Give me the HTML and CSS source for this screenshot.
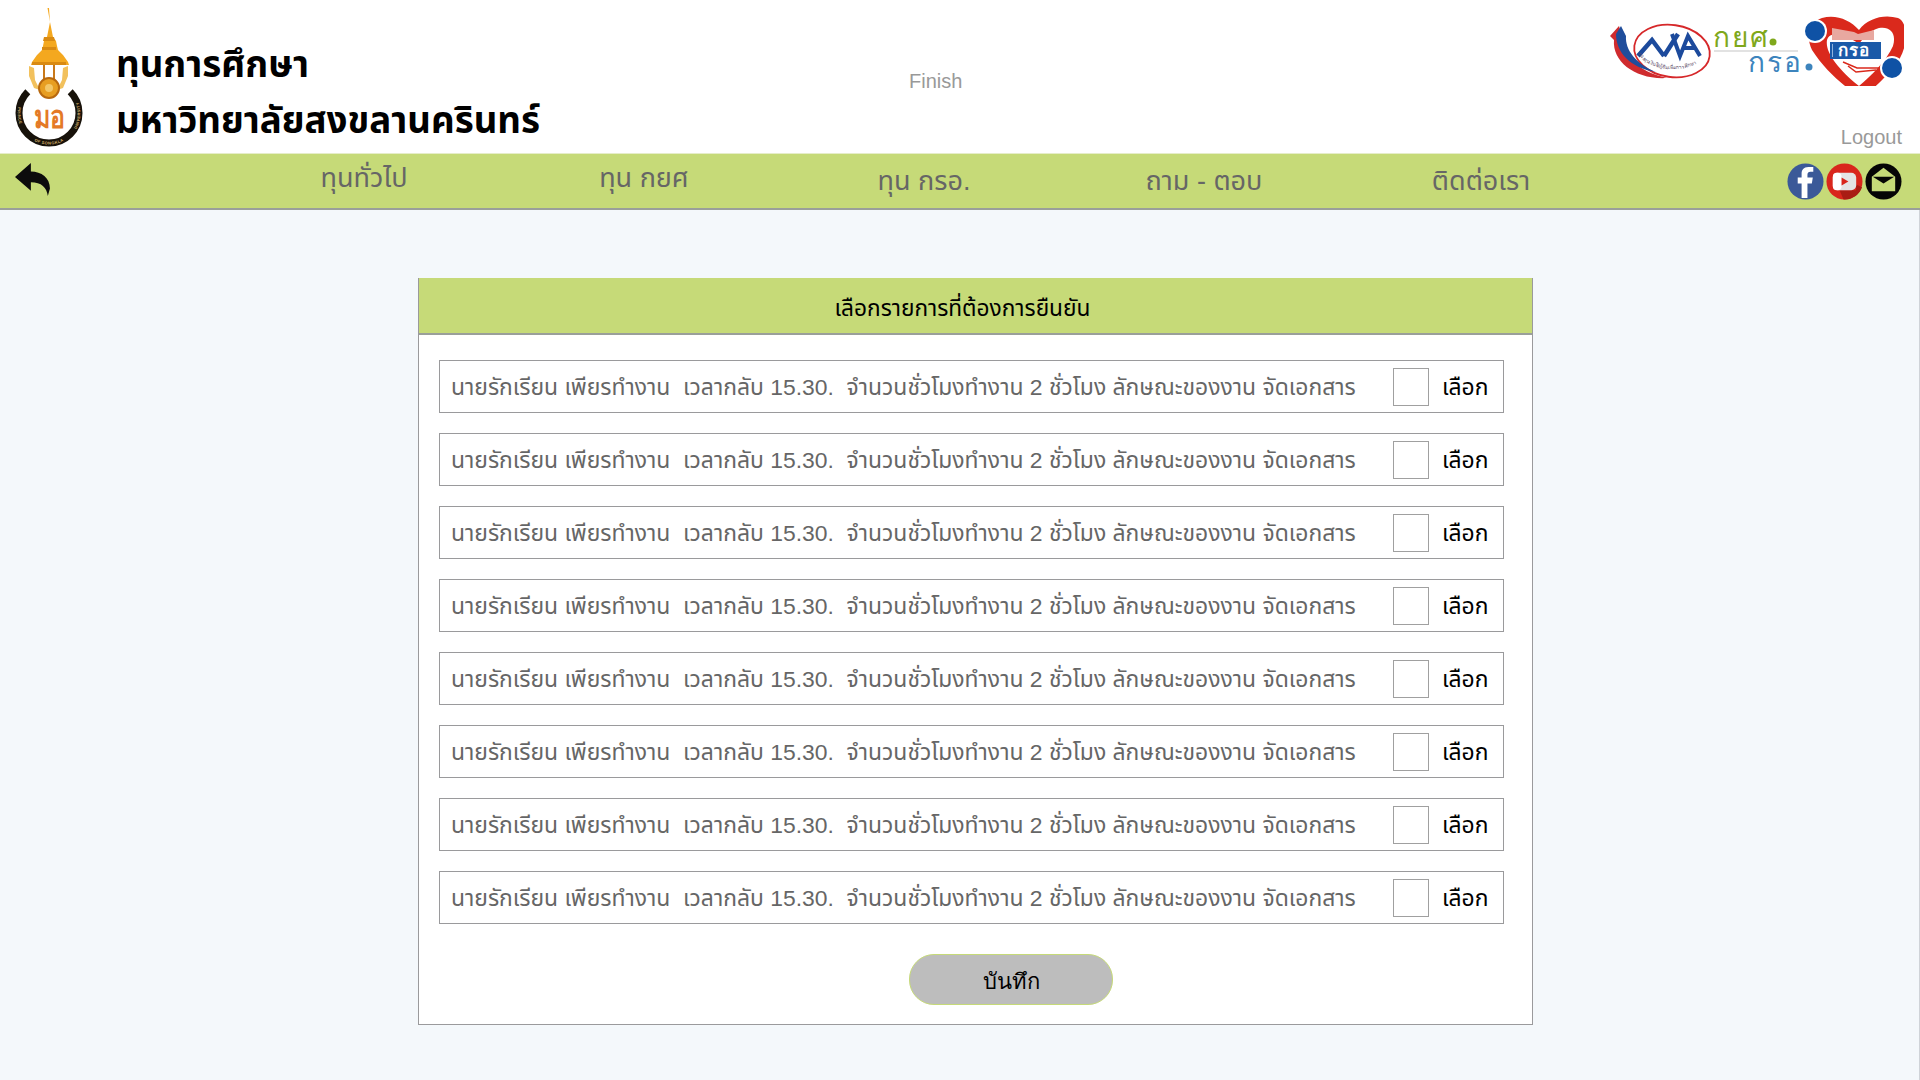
FILE: index.html
```html
<!DOCTYPE html>
<html lang="th">
<head>
<meta charset="utf-8">
<title>ทุนการศึกษา</title>
<link rel="stylesheet" href="styles.css">
</head>
<body>
<header class="top">
  <svg class="psu" viewBox="0 0 100 153" aria-hidden="true">
    <defs>
      <path id="ring-left" d="M20.700 100A31.500 31.500 0 0 0 23 131"/>
      <path id="ring-bottom" d="M26.700 135.300A31.500 31.500 0 0 0 71.300 135.300"/>
      <path id="ring-right" d="M75 131A31.500 31.500 0 0 0 77.300 100"/>
    </defs>
    <path d="M47.500 8h1.500l1 14 2 10 1 5 3 4 1 5 1 4 5 5 5 7 1 3H31l1-3 5-7 5-5 1-4 1-5 3-4 1-5 2-10z" fill="#f4a81f"/>
    <path d="M44 37h10l1 4H43zM42 47h14v3H42zM32 62h34v3H32z" fill="#d98a12"/>
    <path d="M43 65h2v16h-2zM53 65h2v16h-2z" fill="#c9791a"/>
    <path d="M29 66l5 2 1 12 5 10-6-2-5-12zM68 66l-5 2-1 12-5 10 6-2 5-12z" fill="#f2c15d"/>
    <circle cx="49" cy="88" r="10" fill="#e79e22" stroke="#b8690f" stroke-width="2"/>
    <circle cx="49" cy="88" r="4" fill="#f3c768"/>
    <path d="M27.800 91.800A30 30 0 1 0 70.200 91.800" fill="none" stroke="#17120a" stroke-width="7"/>
    <text class="psu-ring"><textPath href="#ring-left" startOffset="50%">PRINCE</textPath></text>
    <text class="psu-ring"><textPath href="#ring-bottom" startOffset="50%">OF SONGKLA</textPath></text>
    <text class="psu-ring"><textPath href="#ring-right" startOffset="50%">UNIVERSITY</textPath></text>
    <text x="34" y="128" class="psu-mark" textLength="31" lengthAdjust="spacingAndGlyphs">มอ</text>
  </svg>
  <div class="brand">
    <div class="brand-line">ทุนการศึกษา</div>
    <div class="brand-line">มหาวิทยาลัยสงขลานครินทร์</div>
  </div>
  <div class="finish">Finish</div>
  <div class="top-right">
    <svg class="partners" viewBox="0 0 304 76" aria-hidden="true">
      <defs><path id="sfund" d="M38 44C48 60 80 66 104 50"/></defs>
      <ellipse cx="72" cy="41" rx="38" ry="26" fill="none" stroke="#d6282a" stroke-width="1.800" transform="rotate(8 72 41)"/>
      <path d="M10 26l9-10 4 13c-1 16 14 32 44 39C36 70 12 52 14 30z" fill="#cf2b2e"/>
      <path d="M16 24l5-8 5 10c-1 14 10 28 30 36C30 58 16 42 16 24z" fill="#1f4d9b"/>
      <path d="M38 46l14-16 12 16M64 46l14-22" fill="none" stroke="#1c4a9c" stroke-width="4.500"/>
      <path d="M72 24l8 22 8-20 12 20M82 38h14" fill="none" stroke="#1c4a9c" stroke-width="4"/>
      <text class="t-fund"><textPath href="#sfund">กองทุนเงินให้กู้ยืมเพื่อการศึกษา</textPath></text>
      <text x="113" y="37" class="t-green">กยศ</text>
      <circle cx="173" cy="32" r="3.500" fill="#7fa81c"/>
      <rect x="114" y="40" width="84" height="2" fill="#e2e2e2"/>
      <text x="148" y="62" class="t-blue">กรอ</text>
      <circle cx="209" cy="57" r="3.500" fill="#3d84bd"/>
      <path fill-rule="evenodd" d="M259 20C268 8 284 4 298 8c10 4 10 26 2 40-10 16-26 30-38 40-16-10-36-26-50-48-6-12-4-28 10-32 14-4 28 2 37 12zM259 34c-8-6-28-16-32-4-2 12 10 28 32 46 12-10 28-26 34-40 4-14-4-20-14-18-8 2-14 8-20 16z" fill="#da291c"/>
      <circle cx="215" cy="21" r="12" fill="#fff"/>
      <circle cx="215" cy="21" r="10" fill="#0f52a5"/>
      <circle cx="292" cy="58" r="12" fill="#fff"/>
      <circle cx="292" cy="58" r="10" fill="#0f52a5"/>
      <path d="M232 18l22 4 4 2 16-4v10h-42z" fill="#e8a8a0"/>
      <rect x="230" y="32" width="51" height="17" fill="#1a5aa8"/>
      <rect x="232" y="34" width="1" height="13" fill="#8fb4dc"/>
      <text x="238" y="46" class="t-white">กรอ</text>
      <path d="M243 52l14 6 22 0M248 56l8 6 20-2" fill="none" stroke="#da291c" stroke-width="1.500"/>
    </svg>
    <a class="logout">Logout</a>
  </div>
</header>
<nav class="nav">
  <svg class="back" viewBox="0 0 34 32" aria-hidden="true"><path d="M0 14L15 1v8c10 0 18 6 18 16l-2 7c-1-8-6-13-16-13v8z" fill="#0c0c0c"/></svg>
  <div class="nav-items">
    <a class="raised">ทุนทั่วไป</a>
    <a class="raised">ทุน กยศ</a>
    <a>ทุน กรอ.</a>
    <a>ถาม - ตอบ</a>
    <a>ติดต่อเรา</a>
  </div>
  <div class="social">
    <svg viewBox="0 0 38 38" aria-hidden="true"><circle cx="19" cy="19" r="18.500" fill="#3b5998"/><path d="M21 36V21h4.500l1-6H21v-3c0-2 1-3 3-3h3V4h-5c-5 0-7 3-7 7v4h-4v6h4v15z" fill="#fff"/></svg>
    <svg viewBox="0 0 38 38" aria-hidden="true"><circle cx="19" cy="19" r="18.500" fill="#d9261c"/><path d="M14 28h17v-6l6 3a18.500 18.500 0 0 1-19 12.500z" fill="#a91c14"/><rect x="7" y="10" width="24" height="18" rx="5" fill="#e4e4e4"/><rect x="7" y="10" width="9" height="18" rx="4" fill="#fff"/><path d="M16 15l7 4-7 4z" fill="#d9261c"/></svg>
    <svg viewBox="0 0 38 38" aria-hidden="true"><circle cx="19" cy="19" r="18.500" fill="#050505"/><path d="M7 14L19 5l12 9v15H7z" fill="#c5da78"/><path d="M8 14h22L19 21z" fill="#050505"/></svg>
  </div>
</nav>
<main class="page">
  <section class="card">
    <h1 class="card-title">เลือกรายการที่ต้องการยืนยัน</h1>
    <div class="card-body">
      <label class="row"><span class="row-text">นายรักเรียน เพียรทำงาน &nbsp;เวลากลับ 15.30. &nbsp;จำนวนชั่วโมงทำงาน 2 ชั่วโมง ลักษณะของงาน จัดเอกสาร</span><span class="check"></span><span class="pick">เลือก</span></label>
      <label class="row"><span class="row-text">นายรักเรียน เพียรทำงาน &nbsp;เวลากลับ 15.30. &nbsp;จำนวนชั่วโมงทำงาน 2 ชั่วโมง ลักษณะของงาน จัดเอกสาร</span><span class="check"></span><span class="pick">เลือก</span></label>
      <label class="row"><span class="row-text">นายรักเรียน เพียรทำงาน &nbsp;เวลากลับ 15.30. &nbsp;จำนวนชั่วโมงทำงาน 2 ชั่วโมง ลักษณะของงาน จัดเอกสาร</span><span class="check"></span><span class="pick">เลือก</span></label>
      <label class="row"><span class="row-text">นายรักเรียน เพียรทำงาน &nbsp;เวลากลับ 15.30. &nbsp;จำนวนชั่วโมงทำงาน 2 ชั่วโมง ลักษณะของงาน จัดเอกสาร</span><span class="check"></span><span class="pick">เลือก</span></label>
      <label class="row"><span class="row-text">นายรักเรียน เพียรทำงาน &nbsp;เวลากลับ 15.30. &nbsp;จำนวนชั่วโมงทำงาน 2 ชั่วโมง ลักษณะของงาน จัดเอกสาร</span><span class="check"></span><span class="pick">เลือก</span></label>
      <label class="row"><span class="row-text">นายรักเรียน เพียรทำงาน &nbsp;เวลากลับ 15.30. &nbsp;จำนวนชั่วโมงทำงาน 2 ชั่วโมง ลักษณะของงาน จัดเอกสาร</span><span class="check"></span><span class="pick">เลือก</span></label>
      <label class="row"><span class="row-text">นายรักเรียน เพียรทำงาน &nbsp;เวลากลับ 15.30. &nbsp;จำนวนชั่วโมงทำงาน 2 ชั่วโมง ลักษณะของงาน จัดเอกสาร</span><span class="check"></span><span class="pick">เลือก</span></label>
      <label class="row"><span class="row-text">นายรักเรียน เพียรทำงาน &nbsp;เวลากลับ 15.30. &nbsp;จำนวนชั่วโมงทำงาน 2 ชั่วโมง ลักษณะของงาน จัดเอกสาร</span><span class="check"></span><span class="pick">เลือก</span></label>
      <div class="actions"><button class="save">บันทึก</button></div>
    </div>
  </section>
</main>
</body>
</html>
```
FILE: styles.css
```css
* { box-sizing: border-box; }
html, body { margin: 0; height: 100%; }
body {
  width: 1920px;
  height: 1080px;
  overflow: hidden;
  background: #f4f8fb;
  font-family: "Liberation Sans", "Noto Sans", "Noto Sans Thai", sans-serif;
  display: flex;
  flex-direction: column;
}
.top {
  height: 153px;
  background: #fff;
  display: flex;
  align-items: stretch;
  flex: none;
}
.psu { width: 100px; height: 153px; flex: none; }
.psu-ring { font: 700 4px "Liberation Sans", sans-serif; fill: #d9b36a; text-anchor: middle; letter-spacing: 0.4px; }
.psu-mark { font: 700 32px "Liberation Sans", sans-serif; fill: #e47a26; }
.brand { margin: 37px 0 0 16px; width: 793px; flex: none; }
.brand-line { font-size: 36.700px; font-weight: 700; line-height: 56px; color: #000; white-space: nowrap; }
.finish { margin: 69px 0 0 0; font-size: 20px; line-height: 24px; color: #999; }
.top-right { margin-left: auto; padding: 10px 16px 0 0; display: flex; flex-direction: column; align-items: flex-end; }
.partners { width: 304px; height: 76px; overflow: hidden; }
.t-green { font: 28px "Liberation Sans", sans-serif; fill: #7fa81c; letter-spacing: 2px; }
.t-blue { font: 28px "Liberation Sans", sans-serif; fill: #3d84bd; letter-spacing: 2px; }
.t-white { font: 700 17px "Liberation Sans", sans-serif; fill: #fff; letter-spacing: 1px; }
.t-fund { font: 5px "Liberation Sans", sans-serif; fill: #5a4a66; }
.logout { margin-top: 39px; padding-right: 2px; font-size: 20px; line-height: 24px; color: #999; }
.nav {
  height: 57px;
  background: #c6da78;
  border-top: 1px solid #e6edc9;
  border-bottom: 2px solid #9a9f9a;
  display: flex;
  align-items: center;
  padding: 0 18px 0 15px;
  flex: none;
}
.back { width: 36px; height: 34px; margin-top: -4px; flex: none; }
.nav-items { display: flex; align-items: center; margin-left: 173px; flex: none; }
.nav-items a { width: 280px; text-align: center; font-size: 27px; color: #666; white-space: nowrap; }
.nav-items a:last-child { margin-left: -3px; }
.nav-items .raised { margin-bottom: 5px; }
.social { margin-left: auto; display: flex; align-items: center; gap: 2px; }
.social svg { width: 37px; height: 37px; display: block; }
.page { flex: 1; padding: 68px 0 0 418px; border-right: 1px solid #cfd3d8; }
.card { width: 1115px; border: 1px solid #9a9a9c; border-top: 0; background: #fff; }
.card-title {
  margin: 0;
  height: 57px;
  padding: 4px 26px 0 0;
  background: #c6da78;
  border-bottom: 2px solid #9a9f9a;
  font-size: 22.700px;
  font-weight: 400;
  line-height: 52px;
  text-align: center;
  color: #000;
}
.card-body { padding: 25px 28px 19px 20px; display: flex; flex-direction: column; gap: 20px; }
.row {
  height: 53px;
  border: 1px solid #9a9a9c;
  display: flex;
  align-items: center;
  padding: 0 16px 0 11px;
}
.row-text { flex: 1; padding-top: 3px; font-size: 22.900px; color: #666; white-space: nowrap; }
.check { width: 36px; height: 38px; border: 1px solid #a0a0a0; background: #fff; flex: none; }
.pick { margin-left: 13px; width: 45px; padding-top: 3px; font-size: 22.900px; color: #000; flex: none; }
.actions { padding: 10px 0 0 470px; }
.save {
  width: 204px;
  height: 51px;
  border: 1px solid #c6da78;
  border-radius: 25px;
  background: #bdbdbd;
  color: #000;
  font: 22px "Liberation Sans", "Noto Sans", sans-serif;
  padding: 4px 0 0;
}
```
